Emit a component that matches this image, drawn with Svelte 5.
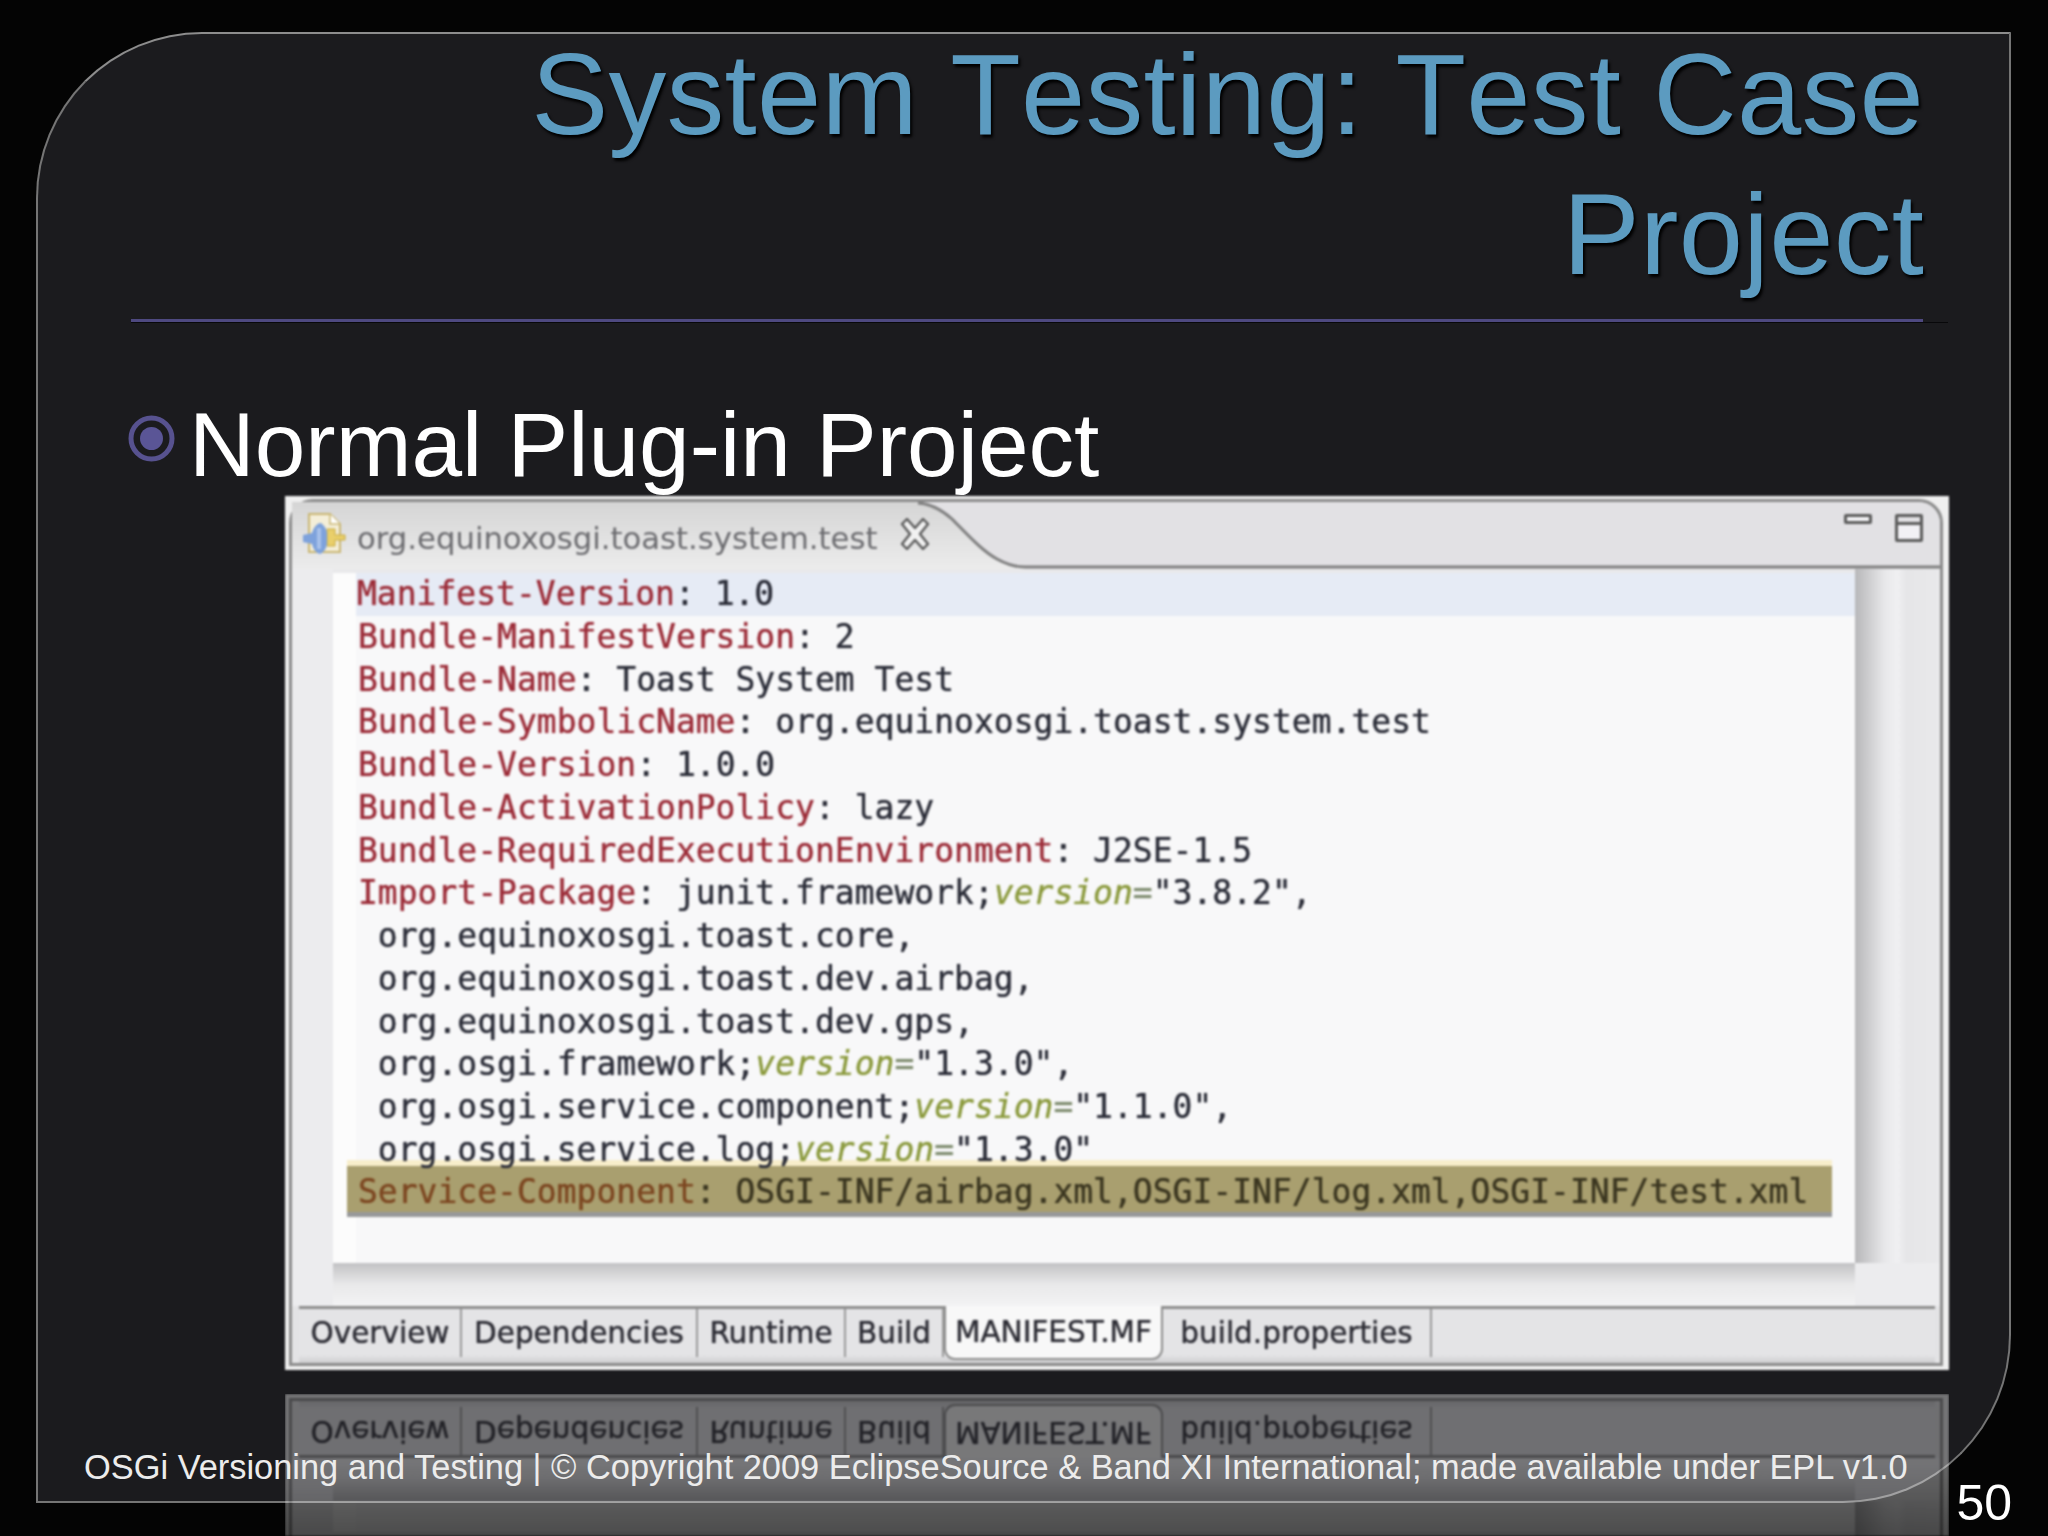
<script>
    const rows = [
        { cls: 'current', parts: [['k', 'Manifest-Version'], ['v', ': 1.0']] },
        { parts: [['k', 'Bundle-ManifestVersion'], ['v', ': 2']] },
        { parts: [['k', 'Bundle-Name'], ['v', ': Toast System Test']] },
        { parts: [['k', 'Bundle-SymbolicName'], ['v', ': org.equinoxosgi.toast.system.test']] },
        { parts: [['k', 'Bundle-Version'], ['v', ': 1.0.0']] },
        { parts: [['k', 'Bundle-ActivationPolicy'], ['v', ': lazy']] },
        { parts: [['k', 'Bundle-RequiredExecutionEnvironment'], ['v', ': J2SE-1.5']] },
        { parts: [['k', 'Import-Package'], ['v', ': junit.framework;'], ['i', 'version'], ['e', '='], ['v', '"3.8.2",']] },
        { parts: [['v', ' org.equinoxosgi.toast.core,']] },
        { parts: [['v', ' org.equinoxosgi.toast.dev.airbag,']] },
        { parts: [['v', ' org.equinoxosgi.toast.dev.gps,']] },
        { parts: [['v', ' org.osgi.framework;'], ['i', 'version'], ['e', '='], ['v', '"1.3.0",']] },
        { parts: [['v', ' org.osgi.service.component;'], ['i', 'version'], ['e', '='], ['v', '"1.1.0",']] },
        { parts: [['v', ' org.osgi.service.log;'], ['i', 'version'], ['e', '='], ['v', '"1.3.0"']] },
        { cls: 'selected', parts: [['k', 'Service-Component'], ['v', ': OSGI-INF/airbag.xml,OSGI-INF/log.xml,OSGI-INF/test.xml']] }
    ];

    const tabs = [
        { label: 'Overview', width: 162 },
        { label: 'Dependencies', width: 236 },
        { label: 'Runtime', width: 148 },
        { label: 'Build', width: 98 },
        { label: 'MANIFEST.MF', width: 219, active: true },
        { label: 'build.properties', width: 269 }
    ];
</script>

{#snippet editor(lines)}
    <div class="editor">
        <div class="gutter"></div>
        <div class="text-col">
            <div class="lines">
                {#each lines as row}
                    <div class="line {row.cls || ''}">{#each row.parts as part}<span class={part[0]}>{part[1]}</span>{/each}</div>
                {/each}
            </div>
            <div class="lines-shadow"></div>
        </div>
        <div class="side"></div>
    </div>
{/snippet}

{#snippet tabBar()}
    <div class="tab-bar">
        {#each tabs as tab}
            <div class="tab" class:active={tab.active} style="width: {tab.width}px">{tab.label}</div>
        {/each}
    </div>
{/snippet}

<div class="page">
    <div class="slide">
        <h1 class="title">System Testing: Test Case<br />Project</h1>
        <div class="rule"></div>

        <div class="bullet">
            <svg class="bullet-mark" width="47" height="47" viewBox="0 0 47 47">
                <circle cx="23.5" cy="23.5" r="20.5" fill="none" stroke="#57528f" stroke-width="5" />
                <circle cx="23.5" cy="23.5" r="11.5" fill="#5a5596" />
            </svg>
            <span>Normal Plug-in Project</span>
        </div>

        <div class="window main">
            <div class="frame">
                <div class="strip">
                    <svg class="strip-art" width="1648" height="67" viewBox="0 0 1648 67">
                        <defs>
                            <linearGradient id="tabfill" x1="0" y1="0" x2="0" y2="1">
                                <stop offset="0" stop-color="#d5d5d5" />
                                <stop offset="1" stop-color="#ececec" />
                            </linearGradient>
                        </defs>
                        <path d="M0 0H626C640 1 650 8 660 17C675 32 690 49 705 57C714 62 722 65 733 65V67H0Z" fill="url(#tabfill)" />
                        <path d="M626 1C640 2 650 8 660 17C675 32 690 49 705 57C714 62 722 65 733 65H1648" fill="none" stroke="#7f7f7f" stroke-width="3" />
                    </svg>
                    <svg class="file-icon" width="44" height="42" viewBox="0 0 44 42">
                        <path d="M6 1H27L37 11V39H6Z" fill="#f4eed8" stroke="#c9b673" stroke-width="2" />
                        <path d="M27 1V11H37" fill="#fff" stroke="#c9b673" stroke-width="1.5" />
                        <path d="M24 16H32V22H42V27H32V33H24Z" fill="#e9cf6b" stroke="#c6a93f" />
                        <path d="M0 22L9 20C11 13 15 10 18 10C22 13 24 17 24 20V30C24 35 21 39 17 41C13 40 10 36 9 31L0 29Z" fill="#7ea2dc" />
                        <path d="M14 15H18V36H14Z" fill="#a9c2ea" />
                    </svg>
                    <span class="file-name">org.equinoxosgi.toast.system.test</span>
                    <svg class="close" width="30" height="32" viewBox="0 0 30 32">
                        <path d="M2 6L7 1L15 10L23 1L28 6L20 16L28 26L23 31L15 22L7 31L2 26L10 16Z" fill="#f1f1f1" stroke="#5c5c5c" stroke-width="2.4" stroke-linejoin="round" />
                    </svg>
                    <div class="win-buttons">
                        <span class="win-min"></span>
                        <span class="win-max"></span>
                    </div>
                </div>
                {@render editor(rows)}
                {@render tabBar()}
            </div>
        </div>

        <div class="reflection">
            <div class="window mirror">
                <div class="frame">
                    {@render editor([])}
                    {@render tabBar()}
                </div>
            </div>
        </div>
    </div>

    <div class="footer">OSGi Versioning and Testing | © Copyright 2009 EclipseSource &amp; Band XI International; made available under EPL v1.0</div>
    <div class="page-number">50</div>
</div>

<style>
    :global(body) {
        margin: 0;
        background: #040404;
    }

    .page {
        position: relative;
        width: 2048px;
        height: 1536px;
        padding: 32px 0 0 36px;
        box-sizing: border-box;
        overflow: hidden;
        background: #040404;
        font-family: "Liberation Sans", Arial, sans-serif;
    }

    .slide {
        width: 1975px;
        height: 1471px;
        box-sizing: border-box;
        background: #1b1b1e;
        border: 2px solid #757575;
        border-top-color: #8d8d8d;
        border-radius: 166px 0 168px 0;
    }

    .title {
        margin: -10px 0 0;
        padding-right: 85px;
        font-size: 115.5px;
        font-weight: normal;
        font-kerning: none;
        letter-spacing: 0.25px;
        line-height: 140px;
        text-align: right;
        color: #5c9bc0;
        text-shadow: 2px 3px 3px #000;
    }

    .rule {
        margin: 15px 0 0 93px;
        width: 1817px;
        height: 3px;
        background: linear-gradient(90deg, #4e4980 1792px, transparent 1792px);
        border-bottom: 1px solid #08080a;
    }

    .bullet {
        display: flex;
        align-items: flex-start;
        gap: 14px;
        margin: 72px 0 0 90px;
        font-size: 91px;
        line-height: 100px;
        color: #fff;
    }

    .bullet-mark {
        margin-top: 20px;
        flex-shrink: 0;
    }

    .window {
        position: relative;
        display: flex;
        flex-direction: column;
        width: 1664px;
        box-sizing: border-box;
        margin-left: 247px;
        background: #efefef;
        padding: 3px 6px 4px 4px;
        filter: blur(0.9px);
    }

    .main {
        margin-top: 1px;
        height: 874px;
    }

    .frame {
        flex: 1;
        display: flex;
        flex-direction: column;
        min-height: 0;
        background: #e3e3e5;
        border: 3px solid #8b8b8b;
        border-radius: 24px 24px 0 0;
    }

    .strip {
        position: relative;
        display: flex;
        align-items: center;
        flex-shrink: 0;
        height: 67px;
        padding: 0 17px 0 11px;
        box-sizing: border-box;
        background: #e2e1e4;
        border-radius: 22px 22px 0 0;
        font-family: "DejaVu Sans", sans-serif;
        font-size: 30.7px;
        color: #6b6b6f;
    }

    .strip-art {
        position: absolute;
        left: 0;
        top: 0;
    }

    .file-icon, .close, .file-name, .win-buttons {
        position: relative;
    }

    .file-icon {
        flex-shrink: 0;
        margin-top: -3px;
    }

    .file-name {
        margin: 6px 0 0 10px;
        white-space: nowrap;
    }

    .close {
        flex-shrink: 0;
        margin: -3px 0 0 23px;
    }

    .win-buttons {
        display: flex;
        align-items: flex-start;
        gap: 23px;
        align-self: flex-start;
        margin: 12px 0 0 auto;
    }

    .win-min {
        width: 28px;
        height: 10px;
        box-sizing: border-box;
        background: #f6f6f8;
        border: 3px solid #5b5b5b;
        border-radius: 2px;
    }

    .win-max {
        width: 28px;
        height: 28px;
        box-sizing: border-box;
        background: linear-gradient(#e2e1e4 5px, #5b5b5b 5px, #5b5b5b 8px, #f2f1f5 8px);
        border: 3px solid #5b5b5b;
        border-radius: 2px;
    }

    .editor {
        flex: 1;
        display: flex;
        min-height: 0;
        background: #ececee;
    }

    .gutter {
        width: 35px;
        flex-shrink: 0;
        margin-left: 6px;
    }

    .text-col {
        width: 1522px;
        flex-shrink: 0;
        display: flex;
        flex-direction: column;
    }

    .lines {
        flex: 1;
        min-height: 0;
        border-top: 4px solid #e9e9eb;
        background: linear-gradient(90deg, #fcfcfc 23px, #f8f8f9 23px);
        font-family: "DejaVu Sans Mono", "Liberation Mono", monospace;
        font-size: 33px;
        line-height: 42.75px;
        text-shadow: 0 0 1px currentColor;
    }

    .lines-shadow {
        flex-shrink: 0;
        height: 43px;
        background: linear-gradient(#c2c2c4, #e9e9ea 50%, #f3f3f4);
    }

    .side {
        flex: 1;
        background:
            linear-gradient(transparent calc(100% - 43px), #ececee calc(100% - 43px)),
            linear-gradient(90deg, #b7b7b9, #e8e8ea 35%, #f0f0f2 50%, #e6e6e8 60%, #e9e9eb);
    }

    .line {
        height: 42.75px;
        padding-left: 25px;
        white-space: pre;
    }

    .line.current {
        margin-left: 23px;
        padding-left: 1px;
        background: #e6ebf5;
    }

    .line.selected {
        height: 46px;
        margin: -5.5px 23px 0 14px;
        padding: 5.5px 0 0 11px;
        box-sizing: border-box;
        line-height: 40.5px;
        background: #a99f6f;
        box-shadow: 0 5px 0 #98999a, 0 -6px 0 #f8eecb;
    }

    .k {
        color: #9c2c38;
    }

    .v {
        color: #2b2d38;
    }

    .i {
        color: #8b9a3d;
        font-style: italic;
    }

    .e {
        color: #7c8a6c;
    }

    .selected .k {
        color: #7c4620;
    }

    .selected .v {
        color: #3b3620;
    }

    .tab-bar {
        display: flex;
        flex-shrink: 0;
        height: 57px;
        box-sizing: border-box;
        margin: 0 5px 0 7px;
        padding: 0 0 6px 1px;
        background: linear-gradient(#e4e4e6, #e4e4e6 85%, #cfcfd1);
        border-top: 3px solid #8d8d8d;
        font-family: "DejaVu Sans", sans-serif;
        font-size: 29.5px;
        color: #2d2d35;
        text-shadow: 0 0 1px currentColor;
    }

    .tab {
        display: flex;
        align-items: center;
        justify-content: center;
        box-sizing: border-box;
        border-right: 2px solid #9a9a9a;
        white-space: nowrap;
    }

    .tab.active {
        height: 54px;
        margin-top: -3px;
        background: #f8f8f8;
        border: 2px solid #8d8d8d;
        border-top: none;
        border-radius: 0 0 11px 11px;
    }

    .reflection {
        margin: 24px 0 0 247px;
        width: 1664px;
        height: 142px;
        overflow: hidden;
        opacity: 0.42;
        mask-image: linear-gradient(#000, #000 50%, rgba(0, 0, 0, 0.7));
    }

    .mirror {
        margin: 0;
        height: 142px;
        padding-top: 0;
        transform: scaleY(-1);
    }

    .mirror .frame {
        border-top: none;
        border-radius: 0;
    }

    .footer {
        position: absolute;
        left: 84px;
        top: 1447px;
        font-size: 34.4px;
        line-height: 40px;
        white-space: nowrap;
        color: #ececec;
    }

    .page-number {
        position: absolute;
        right: 36px;
        top: 1476px;
        font-size: 50px;
        line-height: 55px;
        color: #fff;
    }
</style>
